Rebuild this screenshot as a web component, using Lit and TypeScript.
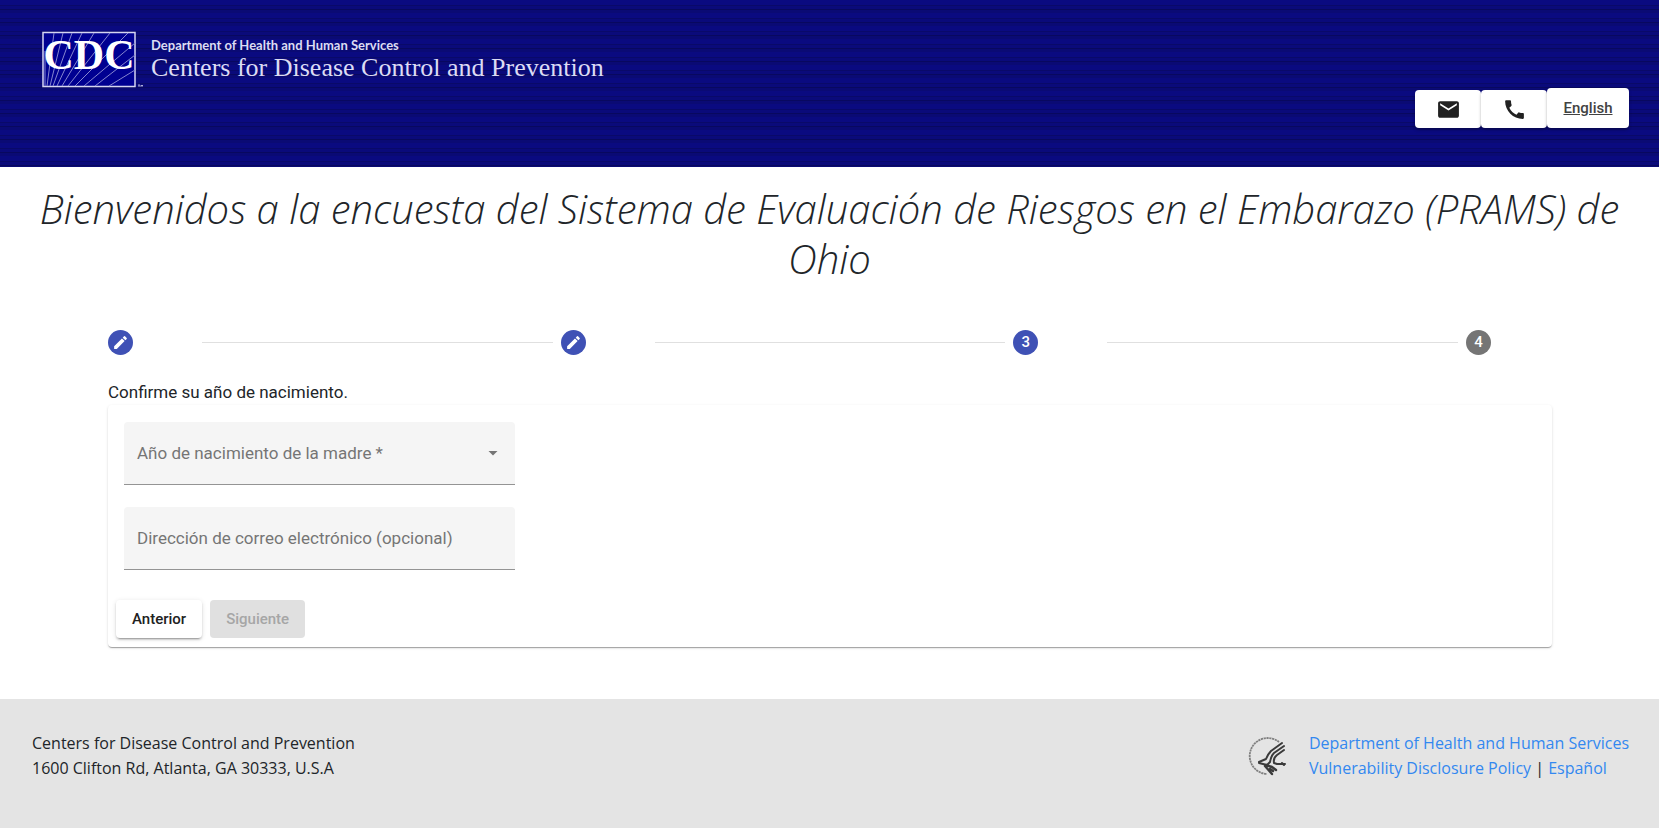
import { LitElement, html, css, svg } from "lit";
import { customElement } from "lit/decorators.js";

const PENCIL = "M3 17.25V21h3.75L17.81 9.94l-3.75-3.75L3 17.25zM20.71 7.04a1 1 0 0 0 0-1.41l-2.34-2.34a1 1 0 0 0-1.41 0l-1.83 1.83 3.75 3.75 1.83-1.83z";
const MAIL = "M20 4H4c-1.1 0-1.99.9-1.99 2L2 18c0 1.1.9 2 2 2h16c1.1 0 2-.9 2-2V6c0-1.1-.9-2-2-2zm0 4l-8 5-8-5V6l8 5 8-5v2z";
const PHONE = "M20.01 15.38c-1.23 0-2.42-.2-3.53-.56a.977.977 0 0 0-1.01.24l-1.57 1.97c-2.83-1.35-5.48-3.9-6.89-6.83l1.95-1.66c.27-.28.35-.67.24-1.02-.37-1.11-.56-2.3-.56-3.53 0-.54-.45-.99-.99-.99H4.19C3.65 3 3 3.24 3 3.99 3 13.28 10.73 21 20.01 21c.71 0 .99-.63.99-1.18v-3.45c0-.54-.45-.99-.99-.99z";

const icon = (d: string) => html`<svg viewBox="0 0 24 24" aria-hidden="true"><path fill="currentColor" d=${d} /></svg>`;

// Rays of the logo: start x on the bottom edge, then the end point.
const RAYS = [
  [3, 3, 20], [5, 12, 2], [8, 21, 2], [11, 30, 2], [15, 40, 2], [20, 52, 2],
  [26, 68, 2], [33, 86, 2], [42, 93, 12], [53, 93, 24], [67, 93, 39],
];

@customElement("cdc-logo")
class CdcLogo extends LitElement {
  static styles = css`
    :host { display: flex; align-items: flex-start; gap: 8px; color: #fff; }
    .mark { display: block; width: 101px; height: 59px; flex: none; }
    .cdc { font: bold 42px "Liberation Serif", serif; }
    .names { display: flex; flex-direction: column; padding-top: 5px; color: #dcdcf4; }
    .dept { font: bold 13px/18px Lato, sans-serif; }
    .centers { font: 26px/28px "Liberation Serif", serif; }
  `;
  render() {
    return html`
      <svg class="mark" viewBox="0 0 101 59" role="img" aria-label="CDC">
        <rect x="1" y="1.500" width="92" height="54" fill="#000091" stroke="#d5d5f2" stroke-width="1.500" />
        ${RAYS.map(([x, ex, ey]) => svg`<path d="M${x} 55L${ex} ${ey}" stroke="#8585cf" stroke-width="1" />`)}
        <text class="cdc" x="47" y="38" text-anchor="middle" fill="#fff">CDC</text>
        <path d="M96 54h2M97 54v2M99 56v-2l1 1 1-1v2" stroke="#d5d5f2" stroke-width=".7" fill="none" />
      </svg>
      <div class="names">
        <span class="dept">Department of Health and Human Services</span>
        <span class="centers">Centers for Disease Control and Prevention</span>
      </div>`;
  }
}

@customElement("survey-stepper")
class SurveyStepper extends LitElement {
  static styles = css`
    :host { display: block; }
    .steps { display: flex; align-items: center; margin: 0; padding: 0; list-style: none; }
    .step { display: flex; align-items: center; flex: 1 0 86px; }
    .step:last-child { flex: 0 0 86px; }
    .step:not(:last-child)::after { content: ""; flex: 1; margin: 0 8px 0 69px; border-top: 1px solid #e0e0e0; }
    .dot { display: flex; align-items: center; justify-content: center; width: 25px; height: 25px; flex: none; border-radius: 50%; background: #3f51b5; color: #fff; font: 500 15px/25px Roboto, sans-serif; }
    .pending { background: #757575; }
    svg { width: 17px; height: 17px; }
  `;
  render() {
    return html`<ol class="steps">
      <li class="step"><span class="dot">${icon(PENCIL)}</span></li>
      <li class="step"><span class="dot">${icon(PENCIL)}</span></li>
      <li class="step" aria-current="step"><span class="dot">3</span></li>
      <li class="step"><span class="dot pending">4</span></li>
    </ol>`;
  }
}

@customElement("app-root")
class AppRoot extends LitElement {
  static styles = css`
    :host { display: flex; flex-direction: column; min-height: 100vh; background: #fff; color: #212529; font-family: Roboto, sans-serif; }
    * { box-sizing: border-box; }
    header { display: flex; justify-content: space-between; min-height: 167px; padding: 31px 30px 39px 42px;
      background: repeating-linear-gradient(#0a0a80 0 5px, #090969 5px 6px, #0a0a7a 6px 9px, #08085f 9px 10px, #0a0a74 10px 13px); }
    .actions { display: flex; align-items: flex-end; align-self: flex-end; }
    .action { display: flex; align-items: center; justify-content: center; width: 66px; height: 38px; padding: 0; border: 0; border-radius: 4px; background: #fff; color: #212121; box-shadow: 0 2px 3px rgba(0,0,0,.3); font: 500 15px/38px Roboto, sans-serif; }
    .action svg { width: 25px; height: 25px; }
    .language { width: 82px; height: 40px; color: #424242; text-decoration: underline; }
    h1 { margin: 17px 32px 0; text-align: center; font: italic 300 40px/50px "Open Sans", sans-serif; color: #212529; }
    main { flex: 1; padding: 46px 107px 52px 108px; }
    .prompt { margin: 26px 0 1px; font-size: 17px; line-height: 23px; }
    .card { display: flex; flex-direction: column; align-items: flex-start; padding: 17px 16px 9px 8px; border-radius: 4px; box-shadow: 0 2px 1px -1px rgba(0,0,0,.2), 0 1px 1px rgba(0,0,0,.14), 0 1px 3px rgba(0,0,0,.12); }
    .field { display: grid; align-items: center; width: 391px; max-width: 100%; height: 63px; margin: 0 0 22px 8px; border-bottom: 1px solid #949494; border-radius: 4px 4px 0 0; background: #f5f5f5; }
    .field > * { grid-area: 1 / 1; }
    .field label { z-index: 1; padding: 0 13px; font-size: 17px; line-height: 20px; color: #757575; pointer-events: none; }
    .control { width: 100%; height: 100%; padding: 18px 13px 0; border: 0; background: transparent; appearance: none; font: 17px Roboto, sans-serif; }
    .arrow { z-index: 1; justify-self: end; width: 10px; height: 5px; margin-right: 17px; background: #757575; clip-path: polygon(0 0, 100% 0, 50% 100%); pointer-events: none; }
    .buttons { display: flex; gap: 8px; padding-top: 8px; }
    .btn { height: 38px; padding: 0 16px; border: 0; border-radius: 4px; background: #fff; color: #212121; font: 500 15px/38px Roboto, sans-serif; box-shadow: 0 3px 1px -2px rgba(0,0,0,.2), 0 2px 2px rgba(0,0,0,.14), 0 1px 5px rgba(0,0,0,.12); }
    .btn:disabled { background: #e0e0e0; color: #a6a6a6; box-shadow: none; }
    footer { display: flex; justify-content: space-between; align-items: flex-start; padding: 32px 30px 47px 32px; background: #e4e4e4; font: 16px/25px "Open Sans", sans-serif; }
    footer address { font-style: normal; }
    .hhs { display: flex; align-items: center; gap: 22px; }
    .hhs svg { width: 40px; height: 40px; }
    a { color: #3388f0; text-decoration: none; }
  `;
  render() {
    return html`
      <header>
        <cdc-logo></cdc-logo>
        <div class="actions">
          <button class="action" aria-label="Correo electrónico">${icon(MAIL)}</button>
          <button class="action" aria-label="Teléfono">${icon(PHONE)}</button>
          <button class="action language">English</button>
        </div>
      </header>
      <h1>Bienvenidos a la encuesta del Sistema de Evaluación de Riesgos en el Embarazo (PRAMS) de Ohio</h1>
      <main>
        <survey-stepper></survey-stepper>
        <p class="prompt">Confirme su año de nacimiento.</p>
        <form class="card">
          <div class="field">
            <label for="year">Año de nacimiento de la madre *</label>
            <select id="year" class="control" required><option value=""></option></select>
            <span class="arrow"></span>
          </div>
          <div class="field">
            <label for="email">Dirección de correo electrónico (opcional)</label>
            <input id="email" class="control" type="email" />
          </div>
          <div class="buttons">
            <button class="btn" type="button">Anterior</button>
            <button class="btn" type="button" disabled>Siguiente</button>
          </div>
        </form>
      </main>
      <footer>
        <address>Centers for Disease Control and Prevention<br />1600 Clifton Rd, Atlanta, GA 30333, U.S.A</address>
        <div class="hhs">
          <svg viewBox="0 0 40 40" aria-hidden="true">
            <path d="M32 6A18 18 0 1 0 20 38" fill="none" stroke="#808080" stroke-width="1.800" stroke-dasharray="2.200 .6" />
            <g fill="none" stroke="#3a3a3a" stroke-linecap="round" stroke-linejoin="round">
              <path stroke-width="2" d="M35 7L24 15Q21 18 19 23L12 26" />
              <path stroke-width="2" d="M37 10L27 17Q24 20 23 26L20 29L12 27" />
              <path stroke-width="2" d="M37 14L30 19Q26 22 27 27L30 28H38M35 27L37 29" />
              <path stroke-width="2.400" d="M19 29L25 31L29 34M23 33L26 35M18 30L25 38" />
            </g>
          </svg>
          <div><a href="#hhs">Department of Health and Human Services</a><br /><a href="#policy">Vulnerability Disclosure Policy</a> | <a href="#es">Español</a></div>
        </div>
      </footer>`;
  }
}
